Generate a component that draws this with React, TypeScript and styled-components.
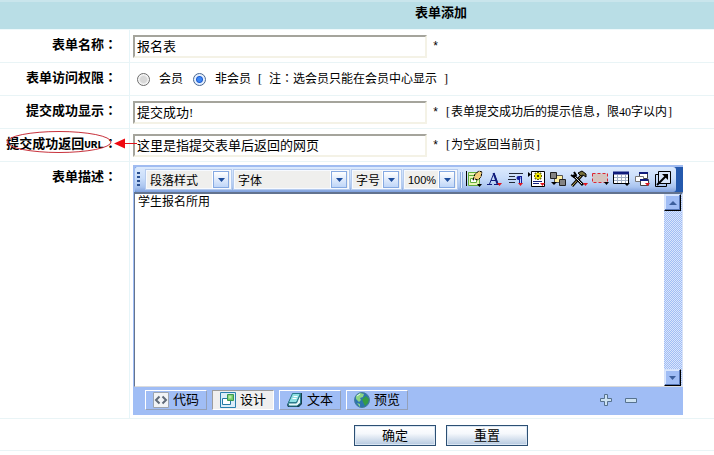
import React from 'react';
import styled, { createGlobalStyle } from 'styled-components';

const GlobalStyle = createGlobalStyle`
  *, *::before, *::after { box-sizing: border-box; }
  body {
    margin: 0;
    background: #fff;
    color: #000;
    font: 12px/18px "Liberation Serif", "Noto Sans CJK SC", sans-serif;
  }
  button, input, select, textarea { font: inherit; color: inherit; margin: 0; }
`;

const Form = styled.form`
  margin: 0;
  overflow: hidden;
`;

const Title = styled.h1`
  margin: 0;
  height: 30px;
  padding-left: 168px;
  border-top: 2px solid #c9e5ec;
  border-bottom: 1px solid #eef9fb;
  background: #b9dee6;
  font-size: 13px;
  line-height: 22px;
  text-align: center;
`;

const Row = styled.div`
  display: grid;
  grid-template-columns: 129px 1fr;
  border-bottom: 1px solid #e9f4f6;
`;

const LabelCell = styled.div`
  position: relative;
  height: 28px;
  padding-right: 12px;
  font-size: 13px;
  font-weight: bold;
  line-height: 28px;
  text-align: right;
  white-space: nowrap;
`;

const Field = styled.div<{ $top?: number }>`
  display: flex;
  align-items: center;
  min-width: 0;
  min-height: 32px;
  padding: ${(p) => p.$top ?? 4}px 0 3px 3px;
  border-left: 1px solid #e6f5f9;
  white-space: nowrap;
`;

const CenteredMark = styled.span`
  font-family: "Noto Sans CJK TC", sans-serif;
`;

const Latin = styled.span`
  font-family: "Liberation Mono", monospace;
  font-size: 11px;
`;

const Half = styled.span<{ $w?: number }>`
  display: inline-block;
  width: ${(p) => p.$w ?? 6}px;
  text-align: center;
`;

const TextInput = styled.input`
  width: 294px;
  height: 23px;
  padding: 0 2px 2px;
  border: 2px solid;
  border-color: #a5a49c #f4f2e6 #f4f2e6 #a5a49c;
  outline: 0;
  background: #fff;
  font-size: 13px;
`;

const Star = styled.span`
  width: 18px;
  padding-left: 5px;
  font-family: "Liberation Mono", monospace;
  line-height: 20px;
`;

const Note = styled.span`
  padding-bottom: 2px;
`;

const RadioLabel = styled.label`
  display: flex;
  align-items: center;
  gap: 9px;
  margin-left: 4px;
  & + & { margin-left: 10px; }
`;

const Radio = styled.input`
  appearance: none;
  width: 13px;
  height: 13px;
  border: 1px solid #6c6c6c;
  border-radius: 50%;
  background: radial-gradient(circle, #d8d8d8 0 3px, #f8f8f8 5px);
  &:checked {
    border-color: #4b6790;
    background: radial-gradient(circle, #3c87f5 0 2px, #1d5bd0 3px, #e4effd 4px);
  }
`;

const Annotation = styled.svg`
  position: absolute;
  left: 0;
  top: -5px;
  z-index: 1;
  pointer-events: none;
`;

const Editor = styled.div`
  width: 550px;
  background: #a0bdf5;
`;

const Toolbar = styled.div`
  display: flex;
  height: 27px;
  border-top: 2px solid #a0bcf1;
  border-left: 2px solid #a0bcf1;
  background: linear-gradient(90deg, #5f92dd, #2459ad);
`;

const ToolStrip = styled.div`
  display: flex;
  flex: 1;
  align-items: center;
  margin-right: 7px;
  border-radius: 2px 3px 3px 2px;
  background: linear-gradient(#dceafd 0, #c9ddfa 45%, #a9c4ef 80%, #7e9fdc 100%);
`;

const Grip = styled.span`
  width: 3px;
  height: 15px;
  margin: 0 5px 0 2px;
  background: repeating-linear-gradient(#2a4f91 0 2px, transparent 2px 4px);
`;

const SelectBox = styled.label<{ $w: number }>`
  display: grid;
  flex: none;
  grid-template-columns: 1fr 19px;
  align-items: center;
  width: ${(p) => p.$w}px;
  height: 21px;
  margin-right: 1px;
  border: 2px solid #f7faff;
  outline: 1px solid #b5cbee;
  outline-offset: -1px;
  background: #efefed;
`;

const Select = styled.select<{ $sans?: boolean }>`
  grid-area: 1 / 1 / 2 / 3;
  appearance: none;
  width: 100%;
  height: 17px;
  padding: 0 0 0 3px;
  border: 0;
  outline: 0;
  background: transparent;
  font-family: ${(p) => (p.$sans ? '"Liberation Sans"' : '"Noto Sans CJK SC"')}, sans-serif;
  font-size: ${(p) => (p.$sans ? 11 : 12)}px;
`;

const SelectArrow = styled.span`
  display: flex;
  grid-area: 1 / 2;
  align-items: center;
  justify-content: center;
  height: 17px;
  margin: 0 1px 0 2px;
  border: 1px solid #86aae2;
  background: linear-gradient(#fff, #bfd6f8);
  box-shadow: -1px 0 0 #fff;
  pointer-events: none;
`;

const Separator = styled.span`
  width: 3px;
  height: 16px;
  margin-left: 1px;
  border: solid #8cabdc;
  border-width: 0 1px;
  background: #e7f0fd;
`;

const ToolButton = styled.button`
  display: flex;
  flex: none;
  align-items: center;
  justify-content: center;
  width: 21px;
  height: 22px;
  padding: 0 0 2px;
  border: 0;
  background: transparent;
`;

const Canvas = styled.div`
  display: grid;
  grid-template-columns: 1fr 18px;
  height: 195px;
  margin-left: 1px;
  border-top: 2px solid #62738f;
  border-left: 1px solid #66758e;
  border-right: 1px solid #d7e2f8;
  border-bottom: 1px solid #dcdcdc;
  background: #fff;
`;

const Area = styled.textarea`
  display: block;
  width: 100%;
  height: 192px;
  padding: 0 3px;
  border: 0;
  outline: 0;
  resize: none;
  overflow: hidden;
  line-height: 16px;
`;

const Scroll = styled.div`
  display: flex;
  flex-direction: column;
  justify-content: space-between;
  background: repeating-conic-gradient(#a0bdf5 0 25%, #dbe6fc 0 50%) 0 0 / 2px 2px;
`;

const ScrollButton = styled.button`
  display: flex;
  align-items: center;
  justify-content: center;
  height: 17px;
  width: 17px;
  padding: 0;
  border: 1px solid;
  border-color: #d5e2fb #000 #000 #d5e2fb;
  background: #a0bdf5;
  box-shadow: inset -1px -1px 0 #5475b5, inset 1px 1px 0 #d9e6fd;
`;

const TabBar = styled.div`
  display: flex;
  align-items: center;
  gap: 5px;
  height: 28px;
  padding: 0 45px 3px 12px;
`;

const Tab = styled.button<{ $active?: boolean }>`
  display: flex;
  align-items: center;
  gap: 4px;
  width: 62px;
  height: 20px;
  padding: 0 0 0 7px;
  border: 1px solid;
  border-color: ${(p) => (p.$active ? '#9c9c9c #fff #fff #9c9c9c' : '#fff #94a0b8 #94a0b8 #fff')};
  background: ${(p) => (p.$active ? '#efefef' : 'transparent')};
  font-size: 13px;
  line-height: 16px;
  white-space: nowrap;
`;

const SizeTools = styled.div`
  display: flex;
  gap: 11px;
  margin-left: auto;
`;

const SizeButton = styled.button`
  display: flex;
  width: 14px;
  padding: 0;
  border: 0;
  background: transparent;
`;

const Actions = styled.div`
  display: flex;
  justify-content: center;
  gap: 10px;
  padding: 6px 0 4px 168px;
  border-bottom: 1px solid #e9f4f6;
`;

const ActionButton = styled.button`
  width: 82px;
  height: 21px;
  padding: 0;
  border: 1px solid #2c4f73;
  background: linear-gradient(#fff 0, #f5f8fc 40%, #b4c8df 100%);
  box-shadow: inset 0 0 0 1px #dbe7f4;
  font-size: 13px;
  line-height: 18px;
`;

const Down = ({ fill = '#1c4c9c' }: { fill?: string }) => (
  <svg width="7" height="4" aria-hidden="true"><path d="M0 0h7L3.500 4z" fill={fill} /></svg>
);

const Colon = () => <CenteredMark>：</CenteredMark>;

const toolIcons: { name: string; art: React.ReactNode }[] = [
  {
    name: '编辑',
    art: (
      <>
        <path d="M1.500 1v15" stroke="#000" />
        <path d="M3.500 2.500h11v13h-11z" fill="#e8f5b5" stroke="#62ad3c" />
        <path d="M3.500 5.500h6M5.500 8.500h6v4h-6z" fill="#fff" stroke="#62ad3c" />
        <path d="M8 10l2-6 4-3 3 1-1 5-3 3-3-1z" fill="#f4cf7a" stroke="#000" strokeDasharray="3 1" />
        <path d="M12 14h5l-2.500 3z" fill="#000" />
      </>
    ),
  },
  {
    name: '字体颜色',
    art: (
      <>
        <path d="M1 14.500h5M8 14.500h5M3.500 14L8 3l4 11M5 10.500h5" fill="none" stroke="#101c7c" />
        <path d="M7.500 3l4 11" stroke="#101c7c" strokeWidth="2" />
        <path d="M11 13h5l-2.500 3z" fill="#e0141e" />
      </>
    ),
  },
  {
    name: '段落',
    art: (
      <>
        <path d="M2 3.500h14M2 6.500h6M1 9.500h8M2 12.500h6" stroke="#222a38" />
        <path d="M15 6.500h-3M12.500 6v8M14.500 6v8" stroke="#101c9c" />
        <circle cx="11.500" cy="8" r="2" fill="#101c9c" />
        <path d="M11 13h5l-2.500 3z" fill="#e0141e" />
      </>
    ),
  },
  {
    name: '插入',
    art: (
      <>
        <path d="M0 2v5l3-2.500z" fill="#000" />
        <path d="M3.500 1.500h13v15h-13z" fill="#fff" stroke="#000" />
        <path d="M10 2v8M6 6h8M7 3l6 6M13 3l-6 6" stroke="#686700" strokeWidth="2" />
        <circle cx="10" cy="6" r="3" fill="#f2e800" />
        <circle cx="10" cy="6" r="1" fill="#000" />
        <path d="M5 11.500h9M5 13.500h6" stroke="#101c7c" />
        <path d="M12 13h5l-2.500 3z" fill="#e0141e" />
      </>
    ),
  },
  {
    name: '排列',
    art: (
      <>
        <path d="M5.500 5.500h8v7h-8z" fill="#fff0a0" stroke="#555" />
        <path d="M1.500 2.500h6v6h-6zM10.500 9.500h6v6h-6z" fill="#838383" stroke="#222" />
        <path d="M2 12h6l-3 3z" fill="#000" />
      </>
    ),
  },
  {
    name: '工具',
    art: (
      <>
        <path d="M2 16L12 5" stroke="#000" strokeWidth="3" />
        <path d="M2 16L12 5" stroke="#cbb55c" />
        <path d="M8 3l4-2 4 3v3l-3-2-2 1z" fill="#77713b" stroke="#000" />
        <path d="M3 5l10 10" stroke="#000" strokeWidth="3" />
        <path d="M4 6l8 8" stroke="#ddd" />
        <path d="M1 5l3 2 2-2-2-3" fill="none" stroke="#000" strokeWidth="2" />
        <path d="M13 13h5l-2.500 3z" fill="#e0141e" />
      </>
    ),
  },
  {
    name: '边框',
    art: (
      <>
        <path d="M1.500 3.500h15v9h-15z" fill="#d4c4c0" stroke="#dc2634" strokeDasharray="3 2" />
        <path d="M13 12h5l-2.500 3z" fill="#000" />
      </>
    ),
  },
  {
    name: '表格',
    art: (
      <>
        <path d="M1.500 2.500h15v11h-15z" fill="#fff" stroke="#000" />
        <path d="M1 3h16" stroke="#101c7c" strokeWidth="3" />
        <path d="M2 7.500h14M2 10.500h14M5.500 5v8M9.500 5v8M13.500 5v8" stroke="#a2b0c4" />
        <path d="M12 13h6l-3 3z" fill="#000" />
      </>
    ),
  },
  {
    name: '图层',
    art: (
      <>
        <path d="M6.500 2.500h8v6h-8z" fill="#fff" stroke="#444" />
        <path d="M6 3h9" stroke="#101c7c" strokeWidth="2" />
        <path d="M2.500 6.500h8v5h-8z" fill="#fff" stroke="#777" />
        <path d="M7.500 9.500h8v6h-8z" fill="#fff" stroke="#444" />
        <path d="M7 10h8" stroke="#101c7c" strokeWidth="2" />
        <path d="M12 13h5l-2.500 3z" fill="#e0141e" />
      </>
    ),
  },
  {
    name: '最大化',
    art: (
      <>
        <path d="M1.500 4.500h11v12h-11z" fill="none" stroke="#000" />
        <path d="M4.500 1.500h12v12h-12z" fill="#d7e4f8" stroke="#000" />
        <path d="M3 15l10-10" stroke="#000" strokeWidth="2" />
        <path d="M8 4h6v6z" fill="#000" />
      </>
    ),
  },
];

const CodeIcon = () => (
  <svg width="16" height="16" aria-hidden="true">
    <path d="M.5.5h15v15H.5z" fill="#f1f3f6" stroke="#9ca4af" />
    <path d="M6.500 4.500L3 8l3.500 3.500M9.500 4.500L13 8l-3.500 3.500" fill="none" stroke="#606a78" strokeWidth="2" />
  </svg>
);

const DesignIcon = () => (
  <svg width="16" height="16" aria-hidden="true">
    <path d="M.5.5h15v15H.5z" fill="#dbedf8" stroke="#287fae" />
    <path d="M2.500 6.500h8v6h-8z" fill="#fff" stroke="#257aa5" />
    <path d="M7.500 2.500h6v6h-6z" fill="#71ca68" stroke="#3a9750" />
    <path d="M8.500 3.500h3v3h-3z" fill="#b8eaa4" />
  </svg>
);

const TextIcon = () => (
  <svg width="16" height="16" aria-hidden="true">
    <path d="M6 1h9v11l-3 3H1l-1-2z" fill="#173f4e" />
    <path d="M5.500 1.500h8l-4 9h-8z" fill="#8fe0e4" stroke="#287b8b" />
    <path d="M6.500 4.500h4M5.500 6.500h4" stroke="#fff" />
    <path d="M1 11h8.500l4-9v9l-3.500 3H2z" fill="#e5f7f8" stroke="#287b8b" />
  </svg>
);

const GlobeIcon = () => (
  <svg width="16" height="16" aria-hidden="true">
    <circle cx="8" cy="8" r="7.500" fill="#2d74ae" stroke="#477d9b" />
    <path d="M2 4l4-3 4 1-1 3-3 1 1 2-2 2-3-3z" fill="#8bd584" />
    <path d="M8 7l4-3 3 3-1 4-3 3-2-4z" fill="#359c46" />
    <path d="M3 11l3 1v3z" fill="#8bd584" />
    <path d="M3 4l3-2" stroke="#e6f9f4" />
  </svg>
);

const tabs = [
  { name: '代码', icon: <CodeIcon /> },
  { name: '设计', icon: <DesignIcon />, active: true },
  { name: '文本', icon: <TextIcon /> },
  { name: '预览', icon: <GlobeIcon /> },
];

const selects = [
  { label: '段落样式', width: 87 },
  { label: '字体', width: 117 },
  { label: '字号', width: 51 },
  { label: '100%', width: 55, sans: true },
];

export default function App() {
  return (
    <>
      <GlobalStyle />
      <Form onSubmit={(e) => e.preventDefault()}>
        <Title>表单添加</Title>

        <Row>
          <LabelCell><label htmlFor="name">表单名称<Colon /></label></LabelCell>
          <Field>
            <TextInput id="name" defaultValue="报名表" />
            <Star>*</Star>
          </Field>
        </Row>

        <Row>
          <LabelCell id="access">表单访问权限<Colon /></LabelCell>
          <Field role="radiogroup" aria-labelledby="access">
            <RadioLabel><Radio type="radio" name="access" /><Note>会员</Note></RadioLabel>
            <RadioLabel><Radio type="radio" name="access" defaultChecked /><Note>非会员</Note></RadioLabel>
            <Note>
              <Half $w={18}>[</Half>注<Colon />选会员只能在会员中心显示<Half $w={18}>]</Half>
            </Note>
          </Field>
        </Row>

        <Row>
          <LabelCell><label htmlFor="success">提交成功显示<Colon /></label></LabelCell>
          <Field>
            <TextInput id="success" defaultValue="提交成功!" />
            <Star>*</Star>
            <Note>
              <Half>[</Half>表单提交成功后的提示信息，限40字以内<Half>]</Half>
            </Note>
          </Field>
        </Row>

        <Row>
          <LabelCell>
            <label htmlFor="url">提交成功返回<Latin>URL</Latin><Colon /></label>
            <Annotation width="138" height="34" viewBox="0 124 138 34" aria-hidden="true">
              <ellipse cx="59" cy="142" rx="52" ry="10.500" fill="none" stroke="#c8323c" />
              <path d="M124 143.500h13" stroke="#e01018" />
              <path d="M114 143.500l11-5v10z" fill="#f00810" />
            </Annotation>
          </LabelCell>
          <Field>
            <TextInput id="url" defaultValue="这里是指提交表单后返回的网页" />
            <Star>*</Star>
            <Note><Half>[</Half>为空返回当前页<Half>]</Half></Note>
          </Field>
        </Row>

        <Row>
          <LabelCell><label htmlFor="description">表单描述<Colon /></label></LabelCell>
          <Field $top={3}>
            <Editor>
              <Toolbar>
                <ToolStrip>
                  <Grip />
                  {selects.map((s) => (
                    <SelectBox key={s.label} $w={s.width}>
                      <Select $sans={s.sans} aria-label={s.label}><option>{s.label}</option></Select>
                      <SelectArrow><Down /></SelectArrow>
                    </SelectBox>
                  ))}
                  <Separator />
                  {toolIcons.map((t) => (
                    <ToolButton key={t.name} type="button" aria-label={t.name}>
                      <svg width="18" height="18" aria-hidden="true">{t.art}</svg>
                    </ToolButton>
                  ))}
                </ToolStrip>
              </Toolbar>
              <Canvas>
                <Area id="description" defaultValue="学生报名所用" />
                <Scroll>
                  <ScrollButton type="button" aria-label="向上">
                    <svg width="8" height="4" aria-hidden="true"><path d="M0 4h8L4 0z" fill="#3c5f9c" /></svg>
                  </ScrollButton>
                  <ScrollButton type="button" aria-label="向下"><Down fill="#3c5f9c" /></ScrollButton>
                </Scroll>
              </Canvas>
              <TabBar>
                {tabs.map((t) => (
                  <Tab key={t.name} type="button" $active={t.active}>{t.icon}{t.name}</Tab>
                ))}
                <SizeTools>
                  <SizeButton type="button" aria-label="增大">
                    <svg width="14" height="14" aria-hidden="true">
                      <path d="M5.500 1.500h3v4h4v3h-4v4h-3v-4h-4v-3h4z" fill="#cde2f2" stroke="#56728f" />
                    </svg>
                  </SizeButton>
                  <SizeButton type="button" aria-label="减小">
                    <svg width="14" height="14" aria-hidden="true">
                      <path d="M1.500 5.500h11v4h-11z" fill="#cde2f2" stroke="#56728f" />
                    </svg>
                  </SizeButton>
                </SizeTools>
              </TabBar>
            </Editor>
          </Field>
        </Row>

        <Actions>
          <ActionButton type="submit">确定</ActionButton>
          <ActionButton type="reset">重置</ActionButton>
        </Actions>
      </Form>
    </>
  );
}
